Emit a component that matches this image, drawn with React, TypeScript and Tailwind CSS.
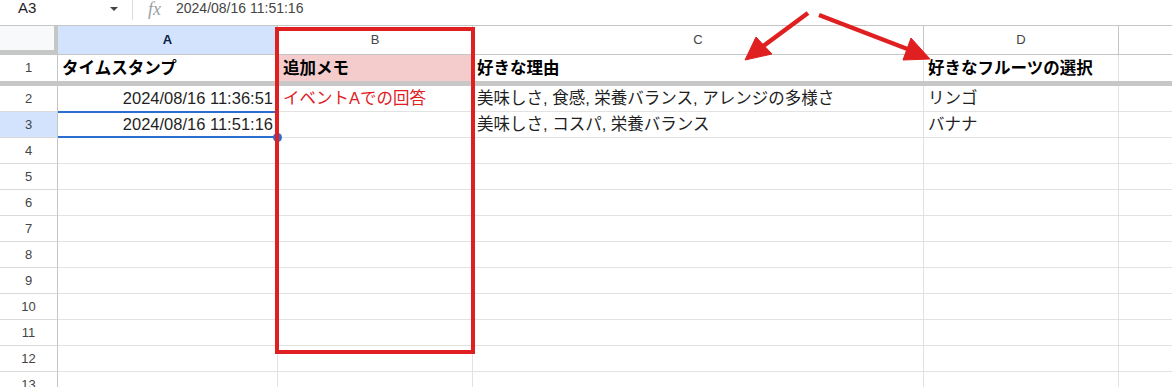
import React from "react";

const FONT = { fontFamily: '"Liberation Sans", Arial, "Noto Sans CJK JP", sans-serif' };

type Row = { n: number; a?: string; b?: string; c?: string; d?: string; bold?: boolean };

const rows: Row[] = [
  { n: 2, a: "2024/08/16 11:36:51", b: "イベントAでの回答", c: "美味しさ, 食感, 栄養バランス, アレンジの多様さ", d: "リンゴ" },
  { n: 3, a: "2024/08/16 11:51:16", c: "美味しさ, コスパ, 栄養バランス", d: "バナナ" },
  { n: 4 }, { n: 5 }, { n: 6 }, { n: 7 }, { n: 8 }, { n: 9 }, { n: 10 }, { n: 11 }, { n: 12 }, { n: 13 },
];

function Arrows() {
  return (
    <svg className="absolute left-0 top-0 pointer-events-none" width="1172" height="387" viewBox="0 0 1172 387">
      <g fill="#e02020" stroke="#e02020">
        <line x1="808" y1="13" x2="762" y2="47" strokeWidth="4.5" />
        <polygon points="745,60 756,37 772,54" strokeWidth="1" />
        <line x1="819" y1="15" x2="910" y2="50" strokeWidth="4.5" />
        <polygon points="930,59 911,38 903,60" strokeWidth="1" />
      </g>
    </svg>
  );
}

export default function App() {
  return (
    <div className="relative w-[1172px] h-[387px] overflow-hidden bg-white text-[#1f1f1f]" style={FONT}>
      {/* formula bar */}
      <div className="h-[25px] flex items-start">
        <div className="h-[17px] flex items-center w-full">
          <div className="w-[110px] pl-[18px] text-[15px] text-[#1f1f1f]">A3</div>
          <div className="w-0 h-0 border-l-[4px] border-r-[4px] border-t-[4px] border-l-transparent border-r-transparent border-t-[#444] mt-[1px]" />
          <div className="ml-[14px] w-px h-[20px] bg-[#dadce0] self-start" />
          <div
            className="ml-[15px] text-[18px] italic text-[#9aa0a6] leading-none"
            style={{ fontFamily: '"Liberation Serif", serif' }}
          >
            fx
          </div>
          <div className="ml-[15px] text-[14px] text-[#444]">2024/08/16 11:51:16</div>
        </div>
      </div>

      {/* column headers */}
      <div className="flex h-[30px] border-t border-b border-[#c4c7c5] text-[13px] text-[#444]">
        <div className="w-[58px] shrink-0 bg-[#f8f9fa] relative">
          <div className="absolute right-0 top-0 bottom-0 w-[4px] bg-[#c4c7c5]" />
          <div className="absolute left-0 right-0 bottom-0 h-[4px] bg-[#c4c7c5]" />
        </div>
        <div className="w-[220px] shrink-0 bg-[#d3e3fd] border-r border-[#c4c7c5] flex items-center justify-center font-bold text-[#0b1f44]">
          A
        </div>
        <div className="w-[195px] shrink-0 border-r border-[#c4c7c5] flex items-center justify-center">B</div>
        <div className="w-[451px] shrink-0 border-r border-[#c4c7c5] flex items-center justify-center">C</div>
        <div className="w-[195px] shrink-0 border-r border-[#c4c7c5] flex items-center justify-center">D</div>
        <div className="flex-1" />
      </div>

      {/* row 1 */}
      <div className="flex h-[26px] text-[16.5px] font-bold text-black">
        <div className="w-[58px] shrink-0 border-r border-[#c4c7c5] flex items-center justify-center text-[13px] font-normal text-[#444]">
          1
        </div>
        <div className="w-[220px] shrink-0 border-r border-[#e2e2e2] flex items-center pl-[4px]">タイムスタンプ</div>
        <div className="w-[195px] shrink-0 border-r border-[#e2e2e2] bg-[#f4cccc] flex items-center pl-[5px]">追加メモ</div>
        <div className="w-[451px] shrink-0 border-r border-[#e2e2e2] flex items-center pl-[4px]">好きな理由</div>
        <div className="w-[195px] shrink-0 border-r border-[#e2e2e2] flex items-center pl-[4px] whitespace-nowrap">好きなフルーツの選択</div>
        <div className="flex-1" />
      </div>
      <div className="h-[5px] bg-[#c7c7c7]" />

      {/* data rows */}
      {rows.map((r) => {
        const sel = r.n === 3;
        return (
          <div key={r.n} className="flex h-[26px] text-[16.5px] text-[#1f1f1f]">
            <div
              className={
                "w-[58px] shrink-0 border-r border-b border-r-[#c4c7c5] border-b-[#dadada] flex items-center justify-center text-[13px] text-[#444] " +
                (sel ? "bg-[#d3e3fd]" : "")
              }
            >
              {r.n}
            </div>
            <div className="relative w-[220px] shrink-0 border-r border-b border-[#e2e2e2] flex items-center justify-end pr-[4px] whitespace-nowrap">
              {r.a}
              {sel && (
                <>
                  <div className="absolute left-0 right-[-1px] top-[-1px] bottom-[-1px] border-2 border-l-0 border-[#2a6fd0]" />
                  <div className="absolute right-[-5px] bottom-[-5px] w-[9px] h-[9px] rounded-full bg-[#2a6fd0]" />
                </>
              )}
            </div>
            <div className="w-[195px] shrink-0 border-r border-b border-[#e2e2e2] flex items-center pl-[5px] text-[#e0201f] whitespace-nowrap">
              {r.b}
            </div>
            <div className="w-[451px] shrink-0 border-r border-b border-[#e2e2e2] flex items-center pl-[4px] whitespace-nowrap">
              {r.c}
            </div>
            <div className="w-[195px] shrink-0 border-r border-b border-[#e2e2e2] flex items-center pl-[4px]">{r.d}</div>
            <div className="flex-1 border-b border-[#e2e2e2]" />
          </div>
        );
      })}

      {/* annotation rectangle */}
      <div className="absolute left-[275px] top-[27px] w-[200px] h-[327px] border-4 border-[#e02020] pointer-events-none" />
      <Arrows />
    </div>
  );
}
